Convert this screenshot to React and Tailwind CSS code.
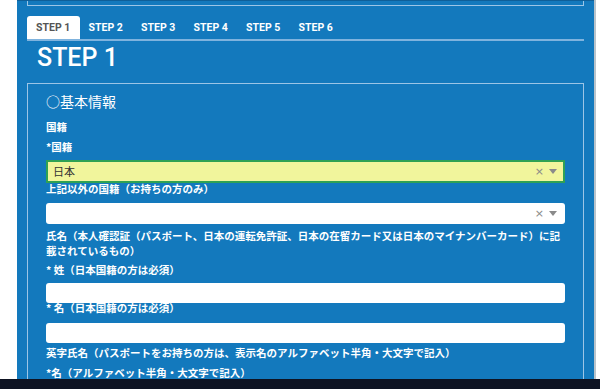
import React from "react";

const jp = { fontFamily: '"Noto Sans CJK JP", "Noto Sans", sans-serif' };
const din = { fontFamily: 'Roboto, "Liberation Sans", sans-serif' };

function Label({ children, className = "" }) {
  return (
    <div className={`shrink-0 text-white font-bold text-[10.5px] whitespace-nowrap ${className}`} style={jp}>
      {children}
    </div>
  );
}

function SelectIcons() {
  return (
    <div className="flex items-center gap-[5px] text-[#8a8a8a]">
      <span className="text-[11px] leading-none" style={{ fontFamily: '"DejaVu Sans", sans-serif' }}>×</span>
      <svg width="8" height="5" viewBox="0 0 8 5"><path d="M0 0 L8 0 L4 5 Z" fill="#8a8a8a" /></svg>
    </div>
  );
}

export default function App() {
  const tabs = ["STEP 1", "STEP 2", "STEP 3", "STEP 4", "STEP 5", "STEP 6"];
  return (
    <div className="w-[600px] h-[389px] overflow-hidden bg-white flex flex-col">
      <div className="flex flex-1 min-h-0">
        <div className="w-[17px] shrink-0 bg-white" />
        <div className="flex-1 bg-[#1379bd] px-[10px] flex flex-col overflow-hidden border-t border-[#0f5f98]">
          <div className="shrink-0 h-[5px] border-x border-b border-[#9cc5e6]" />
          <div className="shrink-0 mt-[10px] h-[25px] flex border-b-2 border-[#7fb3de]" style={din}>
            {tabs.map((t, i) => (
              <div
                key={t}
                className={`w-[52.5px] flex items-center justify-center text-[10.5px] font-bold ${
                  i === 0 ? "bg-white text-[#555] rounded-t-[3px]" : "text-white"
                }`}
              >
                {t}
              </div>
            ))}
          </div>
          <div className="shrink-0 mt-[3px] ml-[10px] h-[28px] leading-[28px] text-white text-[25px] font-medium" style={din}>
            STEP 1
          </div>
          <div className="shrink-0 mt-[11px] h-[400px] border border-b-0 border-[#9cc5e6] px-[18px] flex flex-col">
            <div className="shrink-0 mt-[7px] h-[20px] leading-[20px] text-white text-[14px]" style={jp}>○基本情報</div>
            <Label className="mt-[8px] leading-[16px]">国籍</Label>
            <Label className="mt-[4px] leading-[16px]">*国籍</Label>
            <div className="shrink-0 mt-[5px] h-[23px] bg-[#f1f59c] border-2 border-[#2fa154] flex items-center justify-between pl-[5px] pr-[6px]">
              <span className="text-[11px] text-[#333]" style={jp}>日本</span>
              <SelectIcons />
            </div>
            <Label className="leading-[12px]">上記以外の国籍（お持ちの方のみ）</Label>
            <div className="shrink-0 mt-[8px] h-[21px] bg-white rounded-[3px] flex items-center justify-end pr-[8px]">
              <SelectIcons />
            </div>
            <Label className="mt-[4px] leading-[15px]">
              氏名（本人確認証（パスポート、日本の運転免許証、日本の在留カード又は日本のマイナンバーカード）に記
              <br />
              載されているもの）
            </Label>
            <Label className="mt-[4px] leading-[16px]">* 姓（日本国籍の方は必須）</Label>
            <div className="shrink-0 mt-[5px] h-[20px] bg-white rounded-[3px]" />
            <Label className="leading-[10px]">* 名（日本国籍の方は必須）</Label>
            <div className="shrink-0 mt-[10px] h-[20px] bg-white rounded-[3px]" />
            <Label className="mt-[2px] leading-[16px]">英字氏名（パスポートをお持ちの方は、表示名のアルファベット半角・大文字で記入）</Label>
            <Label className="mt-[4px] leading-[16px]">*名（アルファベット半角・大文字で記入）</Label>
          </div>
        </div>
        <div className="w-[2px] shrink-0 bg-[#b9c3ca]" />
        <div className="w-[4px] shrink-0 bg-white" />
      </div>
      <div className="h-[10px] shrink-0 bg-[#0e1322]" />
    </div>
  );
}
